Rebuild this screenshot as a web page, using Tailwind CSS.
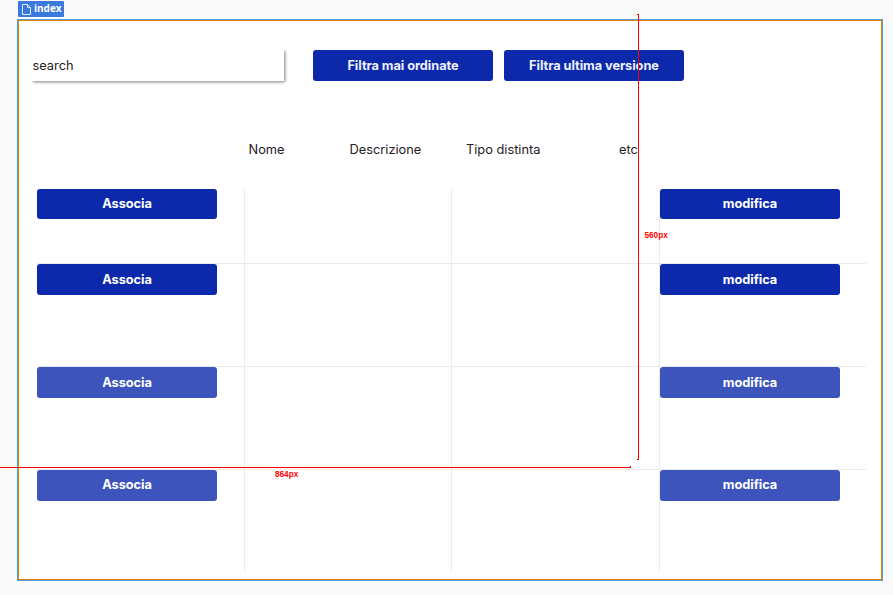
<!DOCTYPE html>
<html lang="it">
<head>
<meta charset="utf-8">
<title>index</title>
<script src="https://cdn.jsdelivr.net/npm/@tailwindcss/browser@4"></script>
</head>
<body class="relative h-[595px] w-[893px] overflow-hidden bg-[#fafafa] font-['Inter','Liberation_Sans',sans-serif] text-[12.8px] leading-[15px] text-[#1f2023]">
<div class="flex h-[19px] pt-px pl-[18px]">
  <div class="flex h-4 w-[46px] items-center gap-[3px] rounded-[1px] bg-[#3b79dd] pl-1 font-['Open_Sans',sans-serif] text-[10px] font-bold text-white">
    <svg class="h-[11px] w-[9px] shrink-0" viewBox="0 0 9 11" fill="none" stroke="#dce8fb" stroke-width="1"><path d="M.5.5h5l3 3v7h-8zM5.500.5v3h3"/></svg>
    <span class="pb-px">index</span>
  </div>
</div>
<main class="ml-[17px] h-[562px] w-[866px] border border-[#4a9fe0]">
  <div class="h-full border border-[#e68000] bg-white">
    <div class="flex pt-[29px] pl-[13px]">
      <div class="mr-[29px] flex h-[31px] w-[252px] items-center bg-white pl-[0.5px] shadow-[1px_1px_3px_rgba(0,0,0,0.5)] [clip-path:inset(0_-5px_-5px_0)]">search</div>
      <button class="mr-[11px] h-[31px] w-[180px] rounded-[3px] bg-[#0c29ab] font-bold tracking-[-0.06px] text-[#eef0fa]">Filtra mai ordinate</button>
      <button class="h-[31px] w-[180px] rounded-[3px] bg-[#0c29ab] font-bold tracking-[-0.06px] text-[#eef0fa]">Filtra ultima versione</button>
    </div>
    <div class="flex h-[108px] pt-[61px] pl-[229.5px]">
      <span class="w-[101px]">Nome</span><span class="w-[116.500px]">Descrizione</span><span class="w-[153px]">Tipo distinta</span><span>etc</span>
    </div>
    <div class="ml-[18px] grid w-[829px] grid-cols-[208px_207px_208px_206px] grid-rows-[75px_103px_103px_102px] [&>div]:border-[#ebebeb] [&_button]:block [&_button]:h-[31px] [&_button]:w-[180px] [&_button]:rounded-[3px] [&_button]:font-bold [&_button]:tracking-[-0.06px] [&_button]:text-white">
      <div class="border-r border-b"><button class="max-h-[30px] bg-[#0c29ab] pb-[2px]">Associa</button></div>
      <div class="border-r border-b"></div><div class="border-r border-b"></div>
      <div class="border-b"><button class="max-h-[30px] bg-[#0c29ab] pb-[2px]">modifica</button></div>
      <div class="border-r border-b"><button class="bg-[#0c29ab]">Associa</button></div>
      <div class="border-r border-b"></div><div class="border-r border-b"></div>
      <div class="border-b"><button class="bg-[#0c29ab]">modifica</button></div>
      <div class="border-r border-b"><button class="bg-[#3d54bc]">Associa</button></div>
      <div class="border-r border-b"></div><div class="border-r border-b"></div>
      <div class="border-b"><button class="bg-[#3d54bc]">modifica</button></div>
      <div class="border-r"><button class="bg-[#3d54bc] pb-[3px]">Associa</button></div>
      <div class="border-r"></div><div class="border-r"></div>
      <div><button class="bg-[#3d54bc] pb-[3px]">modifica</button></div>
    </div>
  </div>
</main>
<!-- Measurement guides -->
<div class="absolute top-[14px] left-[637px] h-[446px] w-[2px] border-r border-[#f00]"></div>
<div class="absolute top-[14px] left-[637px] size-px bg-[#f00]"></div>
<div class="absolute top-[459px] left-[637px] size-px bg-[#f00]"></div>
<div class="absolute top-[467px] left-0 h-px w-[631px] bg-[#f00000]"></div>
<div class="absolute top-[466px] left-[630px] size-px bg-[#f00]"></div>
<span class="absolute top-[231px] left-[644.5px] font-['Liberation_Sans',sans-serif] text-[8.2px] leading-[10px] font-bold text-[#f00]">560px</span>
<span class="absolute top-[470px] left-[275px] font-['Liberation_Sans',sans-serif] text-[8.2px] leading-[10px] font-bold text-[#f00]">864px</span>
</body>
</html>
